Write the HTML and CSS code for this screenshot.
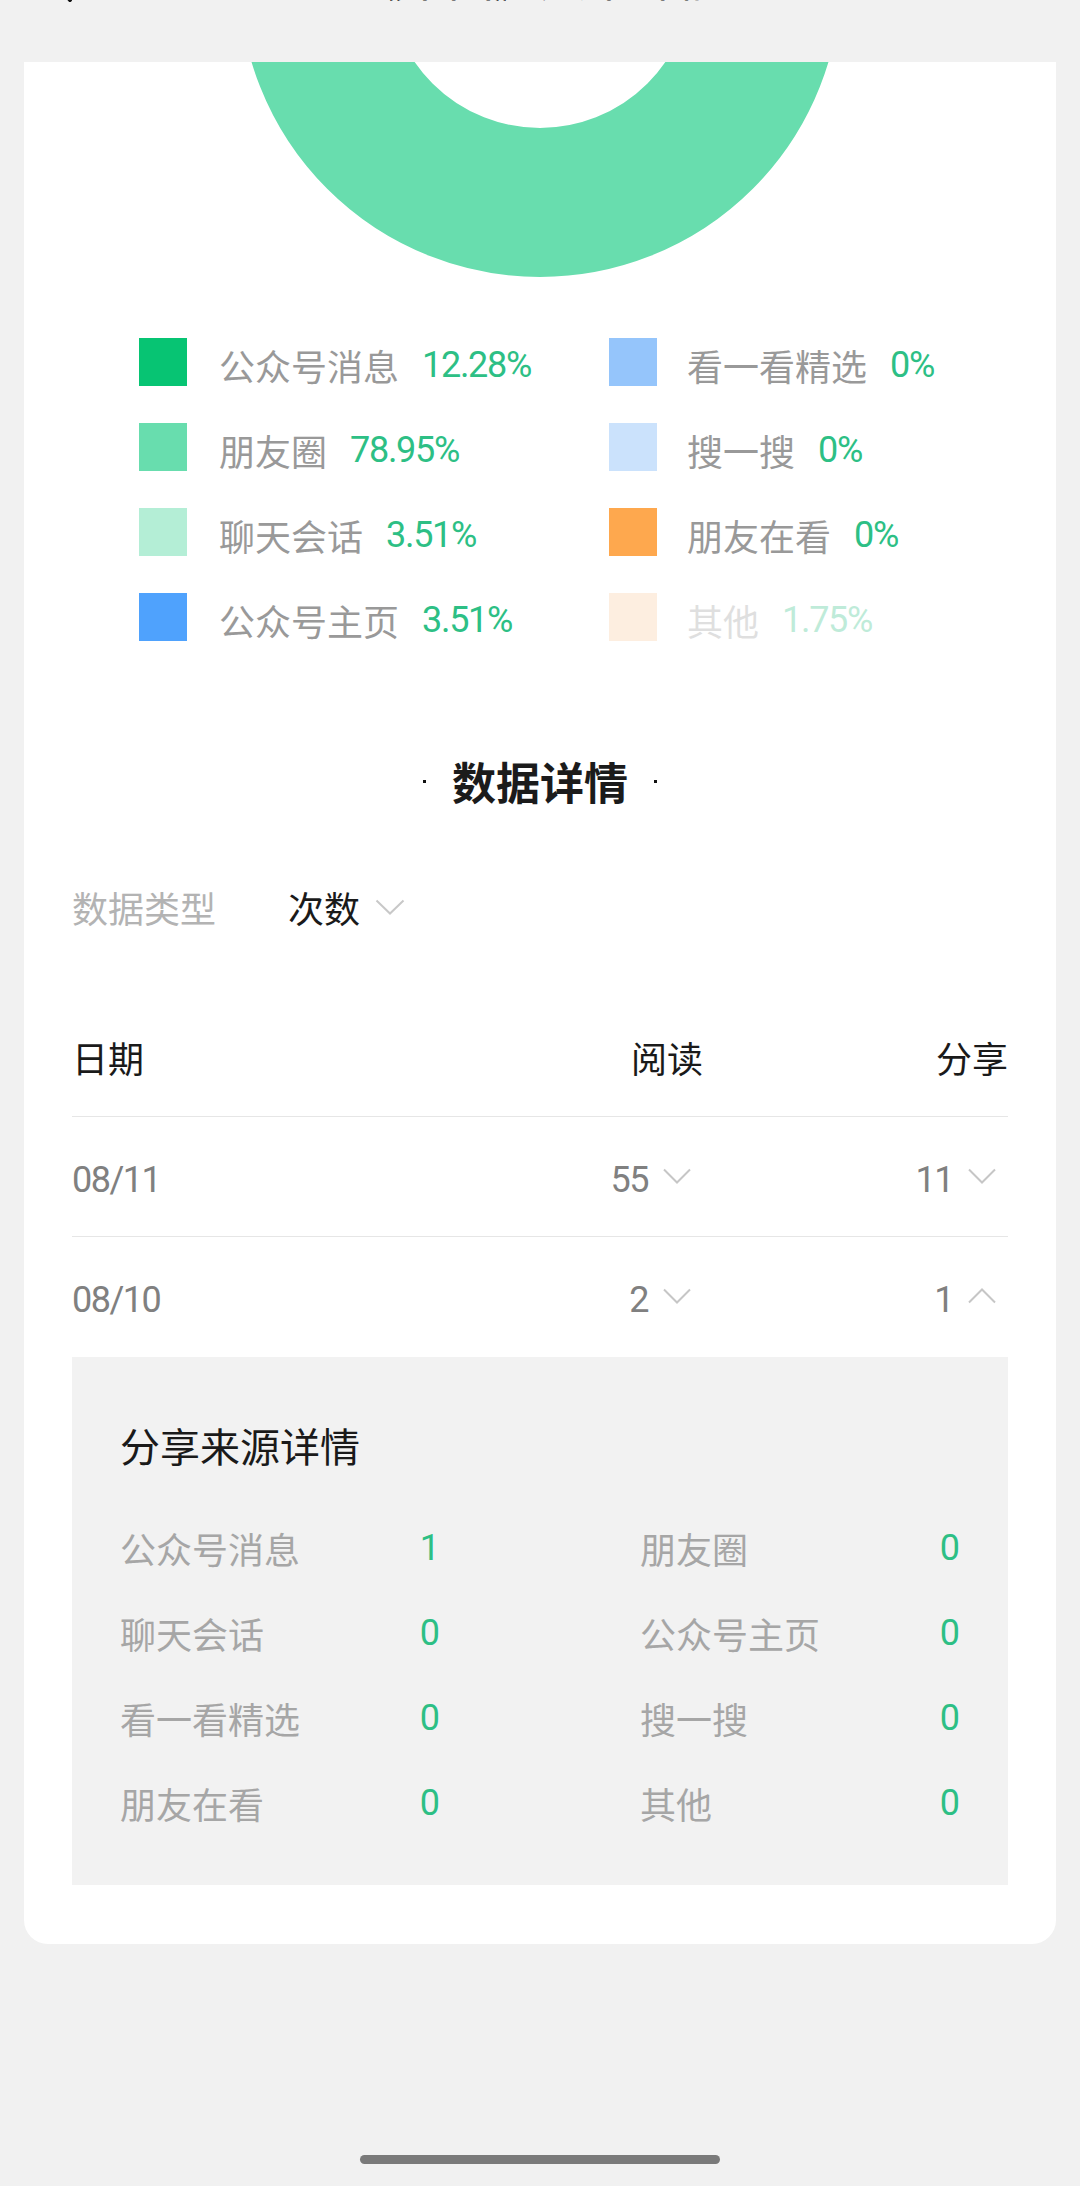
FILE: index.html
```html
<!DOCTYPE html>
<html lang="zh-CN">
<head>
<meta charset="utf-8">
<title>数据详情</title>
<link rel="stylesheet" href="styles.css">
</head>
<body>
<header class="topbar">
  <div class="topbar-inner">
    <svg class="back" width="40" height="56" viewBox="0 0 40 56"><polyline points="30,4 10,28 30,52" fill="none" stroke="#111" stroke-width="4" stroke-linecap="round" stroke-linejoin="round"/></svg>
    <div class="topbar-title">《中国》文章详情</div>
    <div></div>
  </div>
</header>

<main class="card">
  <svg class="donut" width="1032" height="240" viewBox="0 0 1032 240">
    <circle cx="516" cy="-86" r="226.5" fill="none" stroke="#68ddae" stroke-width="149"/>
  </svg>

  <div class="card-body">
    <ul class="legend">
      <li class="legend-item"><span class="swatch sw-msg"></span><span class="legend-label">公众号消息</span><span class="legend-value">12.28%</span></li>
      <li class="legend-item"><span class="swatch sw-moments"></span><span class="legend-label">朋友圈</span><span class="legend-value">78.95%</span></li>
      <li class="legend-item"><span class="swatch sw-chat"></span><span class="legend-label">聊天会话</span><span class="legend-value">3.51%</span></li>
      <li class="legend-item"><span class="swatch sw-home"></span><span class="legend-label">公众号主页</span><span class="legend-value">3.51%</span></li>
      <li class="legend-item legend-item-right"><span class="swatch sw-look"></span><span class="legend-label">看一看精选</span><span class="legend-value">0%</span></li>
      <li class="legend-item legend-item-right"><span class="swatch sw-search"></span><span class="legend-label">搜一搜</span><span class="legend-value">0%</span></li>
      <li class="legend-item legend-item-right"><span class="swatch sw-friends"></span><span class="legend-label">朋友在看</span><span class="legend-value">0%</span></li>
      <li class="legend-item legend-item-right muted"><span class="swatch sw-other"></span><span class="legend-label">其他</span><span class="legend-value">1.75%</span></li>
    </ul>

    <h2 class="section-title"><span class="dot"></span><span>数据详情</span><span class="dot"></span></h2>

    <div class="filter">
      <span class="filter-label">数据类型</span>
      <span class="filter-value">次数</span>
      <svg class="filter-chev" width="30" height="16" viewBox="0 0 30 16"><polyline points="1.5,1.5 15,14.5 28.5,1.5" fill="none" stroke="#c8c8c8" stroke-width="2"/></svg>
    </div>

    <div class="table">
      <div class="trow thead">
        <div class="cell cell-date">日期</div>
        <div class="cell cell-num">阅读</div>
        <div class="cell cell-num">分享</div>
      </div>
      <div class="trow tdata bordered">
        <div class="cell cell-date num">08/11</div>
        <div class="cell cell-num"><span class="num">55</span><svg class="chev" width="28" height="16" viewBox="0 0 28 16"><polyline points="1,1.5 14,14.5 27,1.5" fill="none" stroke="#c6c6c6" stroke-width="2"/></svg></div>
        <div class="cell cell-num"><span class="num">11</span><svg class="chev" width="28" height="16" viewBox="0 0 28 16"><polyline points="1,1.5 14,14.5 27,1.5" fill="none" stroke="#c6c6c6" stroke-width="2"/></svg></div>
      </div>
      <div class="trow tdata">
        <div class="cell cell-date num">08/10</div>
        <div class="cell cell-num"><span class="num">2</span><svg class="chev" width="28" height="16" viewBox="0 0 28 16"><polyline points="1,1.5 14,14.5 27,1.5" fill="none" stroke="#c6c6c6" stroke-width="2"/></svg></div>
        <div class="cell cell-num"><span class="num">1</span><svg class="chev" width="28" height="16" viewBox="0 0 28 16"><polyline points="1,14.5 14,1.5 27,14.5" fill="none" stroke="#c6c6c6" stroke-width="2"/></svg></div>
      </div>
    </div>

    <section class="share-box">
      <h3 class="share-title">分享来源详情</h3>
      <div class="share-grid">
        <div class="share-cell"><span class="share-label">公众号消息</span><span class="share-value">1</span></div>
        <div class="share-cell"><span class="share-label">朋友圈</span><span class="share-value">0</span></div>
        <div class="share-cell"><span class="share-label">聊天会话</span><span class="share-value">0</span></div>
        <div class="share-cell"><span class="share-label">公众号主页</span><span class="share-value">0</span></div>
        <div class="share-cell"><span class="share-label">看一看精选</span><span class="share-value">0</span></div>
        <div class="share-cell"><span class="share-label">搜一搜</span><span class="share-value">0</span></div>
        <div class="share-cell"><span class="share-label">朋友在看</span><span class="share-value">0</span></div>
        <div class="share-cell"><span class="share-label">其他</span><span class="share-value">0</span></div>
      </div>
    </section>
  </div>
</main>

<div class="home-indicator"></div>
</body>
</html>
```

FILE: styles.css
```css
* { box-sizing: border-box; }
html, body { margin: 0; padding: 0; }
body {
  width: 1080px;
  background: #f1f1f1;
  font-family: "Noto Sans CJK SC", "Noto Sans", sans-serif;
  color: #1a1a1a;
}

.topbar {
  height: 62px;
  overflow: hidden;
  background: #f1f1f1;
}
.topbar-inner {
  display: grid;
  grid-template-columns: 1fr auto 1fr;
  align-items: center;
  height: 56px;
  margin-top: -52px;
}
.back { display: block; margin-left: 40px; }
.topbar-title {
  font-size: 46px;
  line-height: 56px;
  color: #111;
}

.card {
  background: #fff;
  margin: 0 24px;
  border-radius: 0 0 24px 24px;
  overflow: hidden;
}
.donut { display: block; }
.card-body { padding: 0 48px 59px; }

/* legend */
.legend {
  list-style: none;
  margin: 36px 0 0 67px;
  padding: 0;
  display: grid;
  grid-auto-flow: column;
  grid-template-rows: repeat(4, 48px);
  grid-template-columns: 470px auto;
  row-gap: 37px;
}
.legend-item {
  display: flex;
  align-items: center;
  font-size: 36px;
  line-height: 48px;
  white-space: nowrap;
}
.legend-label, .legend-value { padding-top: 6px; }
.swatch { width: 48px; height: 48px; flex: none; margin-right: 32px; }
.legend-item-right .swatch { margin-right: 30px; }
.legend-label { color: #999; }
.legend-value {
  color: #2dbf85;
  margin-left: 23px;
  font-family: Roboto, "Noto Sans", sans-serif;
  letter-spacing: -1.3px;
}
.legend-item.muted { opacity: 0.3; }
.sw-msg { background: #07c473; }
.sw-moments { background: #68ddae; }
.sw-chat { background: #b4eed6; }
.sw-home { background: #4fa2fd; }
.sw-look { background: #95c5fb; }
.sw-search { background: #cbe2fc; }
.sw-friends { background: #fea84e; }
.sw-other { background: #f9c99c; }

/* section title */
.section-title {
  margin: 110px 0 0;
  display: flex;
  justify-content: center;
  align-items: center;
  font-size: 44px;
  line-height: 60px;
  font-weight: 700;
  color: #1b1b1b;
}
.dot {
  width: 3px;
  height: 3px;
  background: #111;
  margin: 0 26px;
}

/* filter */
.filter {
  margin-top: 71px;
  display: flex;
  align-items: center;
  font-size: 36px;
  line-height: 50px;
}
.filter-label { color: #b3b3b3; margin-right: 72px; }
.filter-value { color: #1a1a1a; }
.filter-chev { display: block; margin-left: 15px; }

/* table */
.table { margin-top: 65px; }
.trow {
  display: grid;
  grid-template-columns: 1fr 240px 305px;
  align-items: center;
  height: 120px;
  font-size: 36px;
  line-height: 50px;
}
.thead { border-bottom: 1px solid #e6e6e6; color: #1a1a1a; }
.tdata { padding-top: 6px; color: #808080; }
.tdata.bordered { border-bottom: 1px solid #e6e6e6; }
.cell { display: flex; align-items: center; }
.cell-num { justify-content: flex-end; }
.num {
  font-family: Roboto, "Noto Sans", sans-serif;
  letter-spacing: -1.5px;
  color: #808080;
}
.chev { display: block; margin: 0 12px 8px 15px; }

/* share box */
.share-box {
  background: #f2f2f2;
  padding: 60px 48px 57px;
}
.share-title {
  margin: 0;
  font-size: 40px;
  line-height: 56px;
  font-weight: 400;
  color: #1a1a1a;
}
.share-grid {
  margin-top: 50px;
  display: grid;
  grid-template-columns: 320px 320px;
  justify-content: space-between;
  row-gap: 35px;
}
.share-cell {
  display: flex;
  justify-content: space-between;
  align-items: center;
  font-size: 36px;
  line-height: 50px;
}
.share-label { color: #a6a6a6; }
.share-value {
  color: #2dbf85;
  font-family: Roboto, "Noto Sans", sans-serif;
}

.home-indicator {
  width: 360px;
  height: 9px;
  margin: 211px auto 0;
  border-radius: 5px;
  background: #7a7a7a;
}
```
